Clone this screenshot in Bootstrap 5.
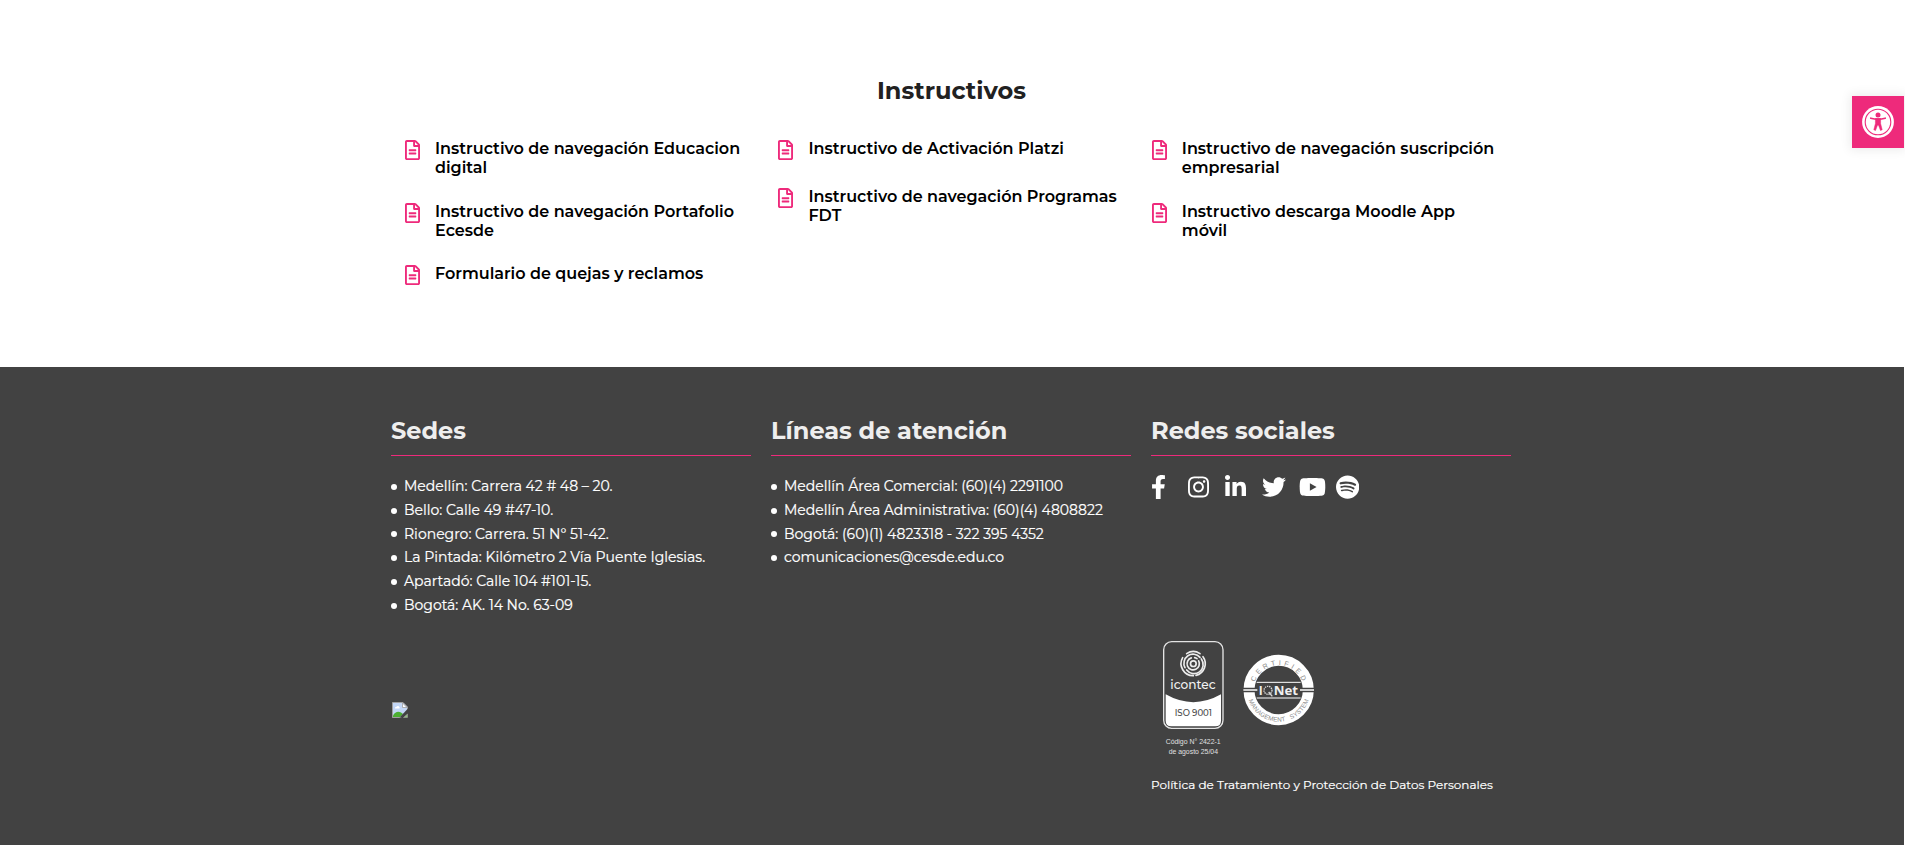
<!DOCTYPE html>
<html lang="es">
<head>
<meta charset="utf-8">
<meta name="viewport" content="width=device-width, initial-scale=1">
<title>Cesde – Instructivos</title>
<link href="https://cdn.jsdelivr.net/npm/bootstrap@5.3.0/dist/css/bootstrap.min.css" rel="stylesheet">
<style>
  body { font-family: Montserrat, Inter, "Open Sans", sans-serif; overflow: hidden; height: 845px; color: #000; padding-right: 1px; }
  .site-wrap { width: 1120px; margin-left: 391px; }
  .guides { height: 367px; padding-top: 79px; }
  .guides h2 { font-size: 24px; font-weight: 700; line-height: 24px; color: #212121; margin-bottom: 36px; padding-left: 1px; }
  .guide-cols { padding-left: 14px; }
  .guide-col { width: 373.4px; flex: none; }
  .guide-col li { min-height: 24px; margin-bottom: 24px; font-size: 16px; font-weight: 600; line-height: 19.3px; display: flex; }
  .guide-col svg { width: 15px; height: 20px; margin: 1px 15px 0 0; flex: none; }
  .site-foot { background: #424242; height: 478px; color: #fff; }
  .foot-cols { gap: 20px; padding-top: 49px; height: 263px; }
  .foot-col { width: 360px; flex: none; }
  .foot-col h3 { font-size: 24px; font-weight: 700; line-height: 29px; color: #eee; margin: 0 0 19px; padding-bottom: 10px; border-bottom: 1px solid #ee2a7b; }
  .foot-col li { font-size: 14px; font-weight: 400; line-height: 23.8px; display: flex; align-items: center; -webkit-text-stroke: .2px #fff; }
  .foot-col li::before { content: ""; width: 6px; height: 6px; border-radius: 50%; background: #fff; margin-right: 7px; }
  .social a { width: 37px; height: 24px; display: flex; }
  .social svg { height: 24px; fill: #fff; }
  .broken-pic { margin: 72px 0 0 1px; }
  .seal-gap { white-space: pre; }
  .policy { font-size: 12px; font-weight: 400; color: #fff; line-height: 18px; white-space: nowrap; margin-top: 6px; -webkit-text-stroke: .2px #fff; }
  .a11y { position: absolute; right: 1px; top: 96px; width: 52px; height: 52px; background: #ee2a7b; box-shadow: 0 0 10px 2px rgba(0,0,0,.08); }
</style>
</head>
<body>
<svg class="d-none"><defs>
  <symbol id="doc" viewBox="0 0 384 512"><path fill="#ee2a7b" d="M288 248v28c0 6.600-5.400 12-12 12H108c-6.600 0-12-5.400-12-12v-28c0-6.600 5.400-12 12-12h168c6.600 0 12 5.400 12 12zm-12 72H108c-6.600 0-12 5.400-12 12v28c0 6.600 5.400 12 12 12h168c6.600 0 12-5.400 12-12v-28c0-6.600-5.400-12-12-12zm108-188.100V464c0 26.500-21.500 48-48 48H48c-26.500 0-48-21.500-48-48V48C0 21.500 21.500 0 48 0h204.100C264.800 0 277 5.100 286 14.100L369.900 98c9 8.900 14.100 21.200 14.100 33.900zm-128-80V128h76.100L256 51.900zM336 464V176H232c-13.300 0-24-10.700-24-24V48H48v416h288z"/></symbol>
</defs></svg>

<main class="guides">
  <div class="site-wrap">
    <h2 class="text-center">Instructivos</h2>
    <div class="guide-cols d-flex">
      <ul class="guide-col list-unstyled mb-0">
        <li><svg><use href="#doc"/></svg><span>Instructivo de navegación Educacion<br>digital</span></li>
        <li><svg><use href="#doc"/></svg><span>Instructivo de navegación Portafolio<br>Ecesde</span></li>
        <li><svg><use href="#doc"/></svg><span>Formulario de quejas y reclamos</span></li>
      </ul>
      <ul class="guide-col list-unstyled mb-0">
        <li><svg><use href="#doc"/></svg><span>Instructivo de Activación Platzi</span></li>
        <li><svg><use href="#doc"/></svg><span>Instructivo de navegación Programas<br>FDT</span></li>
      </ul>
      <ul class="guide-col list-unstyled mb-0">
        <li><svg><use href="#doc"/></svg><span>Instructivo de navegación suscripción<br>empresarial</span></li>
        <li><svg><use href="#doc"/></svg><span>Instructivo descarga Moodle App<br>móvil</span></li>
      </ul>
    </div>
  </div>
</main>

<footer class="site-foot">
  <div class="site-wrap">
    <div class="foot-cols d-flex">
      <section class="foot-col">
        <h3>Sedes</h3>
        <ul class="list-unstyled mb-0">
          <li><span>Medellín: Carrera 42 # 48 – 20.</span></li>
          <li><span>Bello: Calle 49 #47-10.</span></li>
          <li><span>Rionegro: Carrera. 51 N° 51-42.</span></li>
          <li><span>La Pintada: Kilómetro 2 Vía Puente Iglesias.</span></li>
          <li><span>Apartadó: Calle 104 #101-15.</span></li>
          <li><span>Bogotá: AK. 14 No. 63-09</span></li>
        </ul>
      </section>
      <section class="foot-col">
        <h3>Líneas de atención</h3>
        <ul class="list-unstyled mb-0">
          <li><span>Medellín Área Comercial: (60)(4) 2291100</span></li>
          <li><span>Medellín Área Administrativa: (60)(4) 4808822</span></li>
          <li><span>Bogotá: (60)(1) 4823318 - 322 395 4352</span></li>
          <li><span>comunicaciones@cesde.edu.co</span></li>
        </ul>
      </section>
      <section class="foot-col">
        <h3>Redes sociales</h3>
        <div class="social d-flex">
          <a href="#" aria-label="Facebook"><svg viewBox="0 0 320 512"><path d="M279.140 288l14.220-92.660h-88.910v-60.130c0-25.350 12.420-50.060 52.240-50.060h40.420V6.260S260.430 0 225.360 0c-73.220 0-121.080 44.380-121.080 124.720v70.620H22.890V288h81.390v224h100.170V288z"/></svg></a>
          <a href="#" aria-label="Instagram"><svg viewBox="0 0 448 512"><path d="M224.100 141c-63.600 0-114.900 51.300-114.900 114.900s51.300 114.900 114.900 114.900S339 319.500 339 255.900 287.700 141 224.100 141zm0 189.600c-41.100 0-74.700-33.500-74.700-74.700s33.500-74.700 74.700-74.700 74.700 33.500 74.700 74.700-33.600 74.700-74.700 74.700zm146.400-194.300c0 14.900-12 26.800-26.800 26.800-14.900 0-26.800-12-26.800-26.800s12-26.800 26.800-26.800 26.800 12 26.800 26.800zm76.100 27.200c-1.700-35.900-9.900-67.700-36.200-93.900-26.200-26.200-58-34.400-93.900-36.200-37-2.100-147.900-2.100-184.900 0-35.800 1.700-67.600 9.900-93.900 36.100s-34.400 58-36.200 93.900c-2.100 37-2.100 147.900 0 184.900 1.700 35.900 9.900 67.700 36.200 93.900s58 34.400 93.900 36.200c37 2.100 147.900 2.100 184.900 0 35.900-1.700 67.700-9.900 93.900-36.200 26.200-26.200 34.400-58 36.200-93.900 2.100-37 2.100-147.800 0-184.800zM398.800 388c-7.800 19.600-22.900 34.700-42.600 42.600-29.500 11.700-99.500 9-132.100 9s-102.700 2.600-132.100-9c-19.600-7.800-34.700-22.900-42.600-42.600-11.700-29.500-9-99.500-9-132.100s-2.600-102.700 9-132.100c7.800-19.600 22.900-34.700 42.600-42.600 29.500-11.700 99.500-9 132.100-9s102.700-2.600 132.100 9c19.600 7.800 34.700 22.900 42.600 42.600 11.700 29.500 9 99.500 9 132.100s2.700 102.700-9 132.100z"/></svg></a>
          <a href="#" aria-label="LinkedIn"><svg viewBox="0 0 448 512"><path d="M100.280 448H7.400V148.900h92.880zM53.790 108.100C24.090 108.100 0 83.500 0 53.800a53.790 53.790 0 0 1 107.580 0c0 29.700-24.100 54.300-53.790 54.300zM447.900 448h-92.680V302.400c0-34.700-.7-79.200-48.290-79.200-48.290 0-55.690 37.700-55.690 76.700V448h-92.780V148.900h89.080v40.800h1.300c12.400-23.500 42.690-48.300 87.880-48.300 94 0 111.280 61.900 111.280 142.300V448z"/></svg></a>
          <a href="#" aria-label="Twitter"><svg viewBox="0 0 512 512"><path d="M459.370 151.716c.325 4.548.325 9.097.325 13.645 0 138.720-105.583 298.558-298.558 298.558-59.452 0-114.680-17.219-161.137-47.106 8.447.974 16.568 1.299 25.340 1.299 49.055 0 94.213-16.568 130.274-44.832-46.132-.975-84.792-31.188-98.112-72.772 6.498.974 12.995 1.624 19.818 1.624 9.421 0 18.843-1.300 27.614-3.573-48.081-9.747-84.143-51.980-84.143-102.985v-1.299c13.969 7.797 30.214 12.670 47.431 13.319-28.264-18.843-46.781-51.005-46.781-87.391 0-19.492 5.197-37.360 14.294-52.954 51.655 63.675 129.300 105.258 216.365 109.807-1.624-7.797-2.599-15.918-2.599-24.040 0-57.828 46.782-104.934 104.934-104.934 30.213 0 57.502 12.670 76.670 33.137 23.715-4.548 46.456-13.320 66.599-25.340-7.798 24.366-24.366 44.833-46.132 57.827 21.117-2.273 41.584-8.122 60.426-16.243-14.292 20.791-32.161 39.308-52.628 54.253z"/></svg></a>
          <a href="#" aria-label="YouTube"><svg viewBox="0 0 576 512"><path d="M549.655 124.083c-6.281-23.650-24.787-42.276-48.284-48.597C458.781 64 288 64 288 64S117.220 64 74.629 75.486c-23.497 6.322-42.003 24.947-48.284 48.597-11.412 42.867-11.412 132.305-11.412 132.305s0 89.438 11.412 132.305c6.281 23.650 24.787 41.500 48.284 47.821C117.220 448 288 448 288 448s170.780 0 213.371-11.486c23.497-6.321 42.003-24.171 48.284-47.821 11.412-42.867 11.412-132.305 11.412-132.305s0-89.438-11.412-132.305zm-317.510 213.508V175.185l142.739 81.205-142.739 81.201z"/></svg></a>
          <a href="#" aria-label="Spotify"><svg viewBox="0 0 496 512"><path d="M248 8C111.100 8 0 119.100 0 256s111.100 248 248 248 248-111.100 248-248S384.900 8 248 8zm100.700 364.900c-4.200 0-6.800-1.300-10.700-3.600-62.400-37.600-135-39.200-206.700-24.500-3.900 1-9 2.600-11.900 2.600-9.700 0-15.800-7.700-15.800-15.800 0-10.300 6.100-15.200 13.600-16.800 81.900-18.100 165.600-16.500 237 26.200 6.100 3.900 9.700 7.400 9.700 16.500s-7.100 15.400-15.200 15.400zm26.900-65.600c-5.200 0-8.700-2.300-12.300-4.200-62.500-37-155.700-51.900-238.600-29.400-4.800 1.300-7.400 2.600-11.900 2.600-10.700 0-19.400-8.700-19.400-19.400s5.200-17.800 15.500-20.700c27.800-7.800 56.200-13.600 97.800-13.600 64.900 0 127.600 16.100 177 45.500 8.100 4.800 11.300 11 11.300 19.700-.1 10.800-8.500 19.500-19.400 19.500zm31-76.200c-5.200 0-8.400-1.300-12.900-3.900-71.200-42.500-198.500-52.700-280.900-29.700-3.600 1-8.100 2.600-12.900 2.600-13.200 0-23.300-10.300-23.300-23.600 0-13.600 8.400-21.300 17.400-23.900 35.200-10.300 74.600-15.200 117.500-15.200 73 0 149.500 15.200 205.400 47.800 7.800 4.500 12.900 10.700 12.900 22.600 0 13.600-11 23.300-23.200 23.300z"/></svg></a>
        </div>
      </section>
    </div>

    <div class="d-flex" style="gap:20px">
      <div class="foot-col">
        <svg class="broken-pic d-block" width="16" height="16" viewBox="0 0 16 16">
          <path d="M.5.500H11L15.500 5V9L9 15.500H.5z" fill="#c3d7f6" stroke="#a0a0a0"/>
          <path d="M10.500 1v4.500H15z" fill="#fff" stroke="#a0a0a0" stroke-width=".8"/>
          <path d="M3 6.500a1.500 1.500 0 0 1 1.500-1.800 1.700 1.700 0 0 1 3 .6A1 1 0 0 1 7.500 6.500z" fill="#fff"/>
          <path d="M1 15v-1.500C3 10 6 9 9 10.500l2 1.500-3 3z" fill="#4caf32"/>
          <path d="M16 6.500 7.500 15.500H10l6-5z" fill="#424242"/>
          <path d="M11.500 15.500 15.500 12v3.500z" fill="#8fc07d" stroke="#a0a0a0" stroke-width=".6"/>
        </svg>
      </div>
      <div class="foot-col"></div>
      <div class="foot-col">
        <svg class="d-block" width="189" height="140" viewBox="33 0 567 420">
          <defs>
            <path id="arcTop" d="M341 180a75 75 0 0 1 150 0"/>
            <path id="arcLow" d="M321 180a95 95 0 0 0 190 0"/>
          </defs>
          <rect x="71" y="35" width="178" height="260" rx="24" fill="none" stroke="#e4e4e4" stroke-width="4"/>
          <path d="M77 193Q160 240 243 193V272Q243 289 226 289H94Q77 289 77 272z" fill="#fff"/>
          <g fill="none" stroke="#ececec" stroke-width="5" stroke-linecap="round">
            <circle cx="160" cy="101" r="8.500"/>
            <path d="M154 83.500a18.500 18.500 0 1 0 22 9"/>
            <path d="M164 83a18 18 0 0 1 7 3"/>
            <path d="M135 113a27.500 27.500 0 0 1 45-31M184 87a27.500 27.500 0 0 1-44 33" />
            <path d="M140 71a36 36 0 0 1 40 0M189 80a36 36 0 0 1-21 56M160 137a36 36 0 0 1-32-54"/>
          </g>
          <text x="91" y="178" font-size="36" font-weight="500" fill="#f2f2f2" textLength="136" lengthAdjust="spacingAndGlyphs">icontec</text>
          <text x="104" y="258" font-size="26" font-weight="500" fill="#484848" textLength="112" lengthAdjust="spacingAndGlyphs">ISO 9001</text>
          <g font-family="'Liberation Sans', Arial, sans-serif" fill="#e0e0e0" font-size="22">
            <text x="77" y="343" textLength="165" lengthAdjust="spacingAndGlyphs">Código N° 2422-1</text>
            <text x="86" y="372" textLength="148" lengthAdjust="spacingAndGlyphs">de agosto 25/04</text>
          </g>
          <circle cx="416" cy="180" r="89" fill="none" stroke="#fff" stroke-width="33"/>
          <path d="M308 180H352M480 180H524" stroke="#424242" stroke-width="13"/>
          <path d="M310 180H352M480 180H522" stroke="#fff" stroke-width="5"/>
          <path d="M350 157H482M350 204H482" stroke="#fff" stroke-width="3"/>
          <text x="356" y="194" font-family="'Open Sans', sans-serif" font-weight="700" font-size="36" fill="#eee" textLength="12" lengthAdjust="spacingAndGlyphs">I</text>
          <circle cx="384" cy="181" r="12" fill="none" stroke="#ddd" stroke-width="4" stroke-dasharray="4 2.500"/>
          <path d="M386 186l11 13" stroke="#ddd" stroke-width="4"/>
          <text x="401" y="194" font-family="'Open Sans', sans-serif" font-weight="700" font-size="35" fill="#f0f0f0" textLength="73" lengthAdjust="spacingAndGlyphs">Net</text>
          <g font-family="'Liberation Sans', Arial, sans-serif" fill="#8b8b8b" font-size="21">
            <text textLength="185"><textPath href="#arcTop" startOffset="24">CERTIFIED</textPath></text>
            <text font-size="19" textLength="236"><textPath href="#arcLow" startOffset="31" class="seal-gap">MANAGEMENT   SYSTEM</textPath></text>
          </g>
        </svg>
        <div class="policy">Política de Tratamiento y Protección de Datos Personales</div>
      </div>
    </div>
  </div>
</footer>

<a class="a11y d-flex align-items-center justify-content-center" href="#" aria-label="Accesibilidad">
  <svg width="32" height="32" viewBox="0 0 32 32">
    <circle cx="16" cy="16" r="15.900" fill="#fff"/>
    <circle cx="16" cy="16" r="12.800" fill="none" stroke="#ee2a7b" stroke-width="1.100"/>
    <circle cx="16" cy="8.900" r="2.500" fill="#ee2a7b"/>
    <path d="M8.800 12.200Q16 14.200 23.200 12.200" fill="none" stroke="#ee2a7b" stroke-width="1.700" stroke-linecap="round"/>
    <path d="M13.400 12.600h5.200v5l1.600 6.200-1.700.7-2-5.300h-1l-2 5.300-1.700-.7 1.600-6.200z" fill="#ee2a7b" stroke="#ee2a7b" stroke-width=".5" stroke-linejoin="round"/>
  </svg>
</a>
<script src="https://cdn.jsdelivr.net/npm/bootstrap@5.3.0/dist/js/bootstrap.bundle.min.js"></script>
</body>
</html>
